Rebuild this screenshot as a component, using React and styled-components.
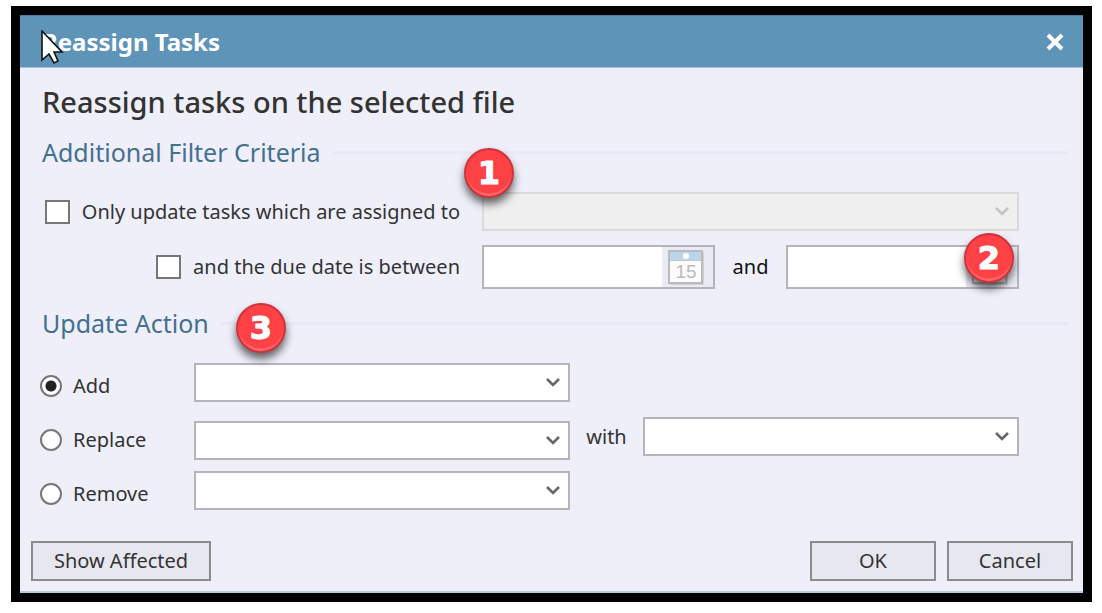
import { useId, useState } from 'react';
import styled, { createGlobalStyle } from 'styled-components';

const actions = ['Add', 'Replace', 'Remove'];

function Combo({ label, disabled, children, className }) {
  return (
    <ComboBox className={className}>
      <ComboSelect aria-label={label} disabled={disabled}>
        <option value=""></option>
      </ComboSelect>
      <Chevron viewBox="0 0 14 10" $disabled={disabled}>
        <path d="M1 2 L7 8 L13 2" />
      </Chevron>
      {children}
    </ComboBox>
  )
}

function DateInput({ label, day, children }) {
  return (
    <DateBox>
      <DateText type="text" aria-label={label} />
      <CalendarButton type="button" aria-label={`Pick ${label}`}>
        <svg width="36" height="35" viewBox="0 0 36 35">
          <rect x="2" y="2" width="34" height="33" fill="#d2d2d6" />
          <rect x="1" y="1" width="33" height="32" fill="#fbfbfb" stroke="#b9bbbf" strokeWidth="2" />
          <rect x="2" y="2" width="31" height="8" fill="#bcd5e8" />
          <path d="M2 10.5 H33" stroke="#c3c6ca" />
          <circle cx="18" cy="6" r="3" fill="#fff" />
          {day && <text x="18" y="28" textAnchor="middle" fontFamily="Liberation Sans, sans-serif" fontSize="19" fill="#bbb">{day}</text>}
        </svg>
      </CalendarButton>
      {children}
    </DateBox>
  )
}

function App() {
  const id = useId();
  const [byUser, setByUser] = useState(false);
  const [byDate, setByDate] = useState(false);
  const [action, setAction] = useState('Add');

  return (
    <>
      <GlobalStyle />
      <Dialog role="dialog" aria-labelledby={id}>
        <TitleBar>
          <Title id={id}>Reassign Tasks</Title>
          <CloseButton type="button" aria-label="Close">
            <svg width="18" height="18" viewBox="0 0 18 18">
              <path d="M2 2 L16 16 M16 2 L2 16" stroke="#fff" strokeWidth="4" />
            </svg>
          </CloseButton>
          <Pointer viewBox="0 0 24 36">
            <path d="M1 1 V30 L8 24 L13 33 L17 31 L13 22 H21 Z" fill="#fff" stroke="#111" strokeWidth="1.6" />
          </Pointer>
        </TitleBar>
        <Content>
          <Heading>Reassign tasks on the selected file</Heading>

          <Section>
            <SectionTitle>Additional Filter Criteria</SectionTitle>
            <Criteria>
              <CheckLabel>
                <CheckBox type="checkbox" checked={byUser} onChange={() => setByUser(!byUser)} />
                Only update tasks which are assigned to
              </CheckLabel>
              <Combo label="Assigned to" disabled={!byUser}>
                <UserBadge>1</UserBadge>
              </Combo>
              <CheckLabel>
                <CheckBox type="checkbox" checked={byDate} onChange={() => setByDate(!byDate)} />
                and the due date is between
              </CheckLabel>
              <DateRange>
                <DateInput label="start date" day="15" />
                <RangeWord>and</RangeWord>
                <DateInput label="end date">
                  <DateBadge>2</DateBadge>
                </DateInput>
              </DateRange>
            </Criteria>
          </Section>

          <Section>
            <SectionTitle>
              Update Action
              <ActionBadge>3</ActionBadge>
            </SectionTitle>
            <Actions>
              {
                actions.map((name) =>
                  <ActionRow key={name}>
                    <RadioLabel>
                      <Radio type="radio" name="action" checked={action === name} onChange={() => setAction(name)} />
                      {name}
                    </RadioLabel>
                    {name === 'Replace' ? <LowCombo label={name} /> : <Combo label={name} />}
                    {
                      name === 'Replace' &&
                      <>
                        <WithWord>with</WithWord>
                        <Combo label="Replace with" />
                      </>
                    }
                  </ActionRow>
                )
              }
            </Actions>
          </Section>
        </Content>
        <Footer>
          <WideButton type="button">Show Affected</WideButton>
          <FooterGroup>
            <Button type="button">OK</Button>
            <Button type="button">Cancel</Button>
          </FooterGroup>
        </Footer>
      </Dialog>
    </>
  )
}

const GlobalStyle = createGlobalStyle`
  * {
    box-sizing: border-box;
  }

  body {
    margin: 0;
    background: #fff;
    color: #333;
    font: 20px/28px "Noto Sans", "Open Sans", sans-serif;
  }
`

const Dialog = styled.div`
  margin: 6px 10px 11px 11px;
  border: 9px solid #000;
  background: #efeffa;
`

const TitleBar = styled.header`
  position: relative;
  display: flex;
  align-items: center;
  justify-content: space-between;
  height: 53px;
  padding: 0 19px 0 22px;
  border-top: 1px solid #497b9d;
  border-bottom: 1px solid #a9c0e0;
  background: #5f94b9;
`

const Title = styled.h1`
  margin: 0;
  color: #fff;
  font-size: 24px;
  font-weight: 700;
`

const CloseButton = styled.button`
  display: flex;
  padding: 0;
  border: 0;
  background: none;
  cursor: pointer;
`

const Pointer = styled.svg`
  position: absolute;
  left: 21px;
  top: 14px;
  width: 24px;
  height: 36px;
`

const Content = styled.main`
  padding: 16px 14px 0 22px;
`

const Heading = styled.h2`
  margin: 0;
  font-size: 29px;
  line-height: 36px;
  font-weight: 500;
`

const Section = styled.section`
  padding-top: 14px;
`

const SectionTitle = styled.h3`
  position: relative;
  display: flex;
  align-items: center;
  gap: 12px;
  margin: 0;
  color: #44708f;
  font-size: 25px;
  line-height: 36px;
  font-weight: 400;

  &::after {
    content: "";
    flex: 1;
    height: 3px;
    background: #e6eaf4;
  }
`

const Criteria = styled.div`
  display: grid;
  grid-template-columns: 418px minmax(0, 1fr);
  gap: 14px 22px;
  align-items: center;
  padding: 22px 50px 2px 0;
`

const CheckLabel = styled.label`
  display: flex;
  align-items: center;
  justify-content: flex-end;
  gap: 12px;
  white-space: nowrap;
`

const CheckBox = styled.input`
  appearance: none;
  flex: none;
  width: 25px;
  height: 24px;
  margin: 0;
  border: 2px solid #777;
  background: #fff;

  &:checked {
    box-shadow: inset 0 0 0 4px #fff;
    background: #333;
  }
`

const ComboBox = styled.div`
  position: relative;
  height: 39px;
`

const LowCombo = styled(Combo)`
  align-self: end;
`

const ComboSelect = styled.select`
  appearance: none;
  display: block;
  width: 100%;
  height: 100%;
  padding: 0 32px 0 8px;
  border: 2px solid #b3b5ba;
  border-radius: 0;
  background: #fff;
  color: #333;
  font: inherit;

  &:disabled {
    border-color: #d9d9da;
    background: #efefef;
    opacity: 1;
  }
`

const Chevron = styled.svg`
  position: absolute;
  right: 10px;
  top: 14px;
  width: 14px;
  height: 10px;
  fill: none;
  stroke: ${props => props.$disabled ? '#c4c4c6' : '#666'};
  stroke-width: 2.6;
  pointer-events: none;
`

const DateRange = styled.div`
  display: grid;
  grid-template-columns: minmax(0, 1fr) auto minmax(0, 1fr);
  gap: 18px;
  align-items: center;
`

const RangeWord = styled.span`
  color: #111;
`

const DateBox = styled.div`
  position: relative;
  display: flex;
  height: 44px;
  border: 2px solid #b3b5ba;
`

const DateText = styled.input`
  flex: 1;
  min-width: 0;
  padding: 0 8px;
  border: 0;
  background: #fff;
  color: #333;
  font: inherit;
`

const CalendarButton = styled.button`
  display: flex;
  align-items: center;
  padding: 0 9px 0 6px;
  border: 0;
  background: #ebebf6;
  cursor: pointer;
`

const Badge = styled.span`
  position: absolute;
  z-index: 1;
  display: flex;
  align-items: center;
  justify-content: center;
  width: 50px;
  height: 50px;
  border: 2px solid #d0333b;
  border-radius: 50%;
  background: #fd4145;
  box-shadow: 0 6px 8px rgba(0, 0, 0, 0.6), inset 0 -3px 2px -1px #f77;
  color: #fff;
  font: 700 32px/32px "DejaVu Sans", sans-serif;
  -webkit-text-stroke: 1px #fff;
`

const UserBadge = styled(Badge)`
  left: -18px;
  top: -44px;
`

const DateBadge = styled(Badge)`
  right: 3px;
  top: -14px;
`

const ActionBadge = styled(Badge)`
  left: 194px;
  top: -2px;
`

const Actions = styled.div`
  display: grid;
  gap: 11px;
  padding: 22px 50px 0 0;
`

const ActionRow = styled.div`
  display: grid;
  grid-template-columns: 152px 1fr 73px 1fr;
  height: 43px;
`

const RadioLabel = styled.label`
  display: flex;
  align-items: center;
  gap: 11px;
  padding-top: 3px;
`

const Radio = styled.input`
  appearance: none;
  width: 22px;
  height: 22px;
  margin: 0 0 0 -2px;
  border: 2px solid #777;
  border-radius: 50%;
  background: #fff;

  &:checked {
    background: radial-gradient(circle, #222 5px, #fff 6px);
  }
`

const WithWord = styled.span`
  line-height: 39px;
  text-align: center;
`

const Footer = styled.footer`
  display: flex;
  justify-content: space-between;
  padding: 27px 10px 10px 11px;
  border-bottom: 2px solid #bccbdb;
`

const FooterGroup = styled.div`
  display: flex;
  gap: 11px;
`

const Button = styled.button`
  width: 126px;
  height: 40px;
  padding: 0;
  border: 2px solid #8a8c8c;
  background: #e7e7f0;
  color: #333;
  font: inherit;
  cursor: pointer;
`

const WideButton = styled(Button)`
  width: 180px;
`

export default App;
